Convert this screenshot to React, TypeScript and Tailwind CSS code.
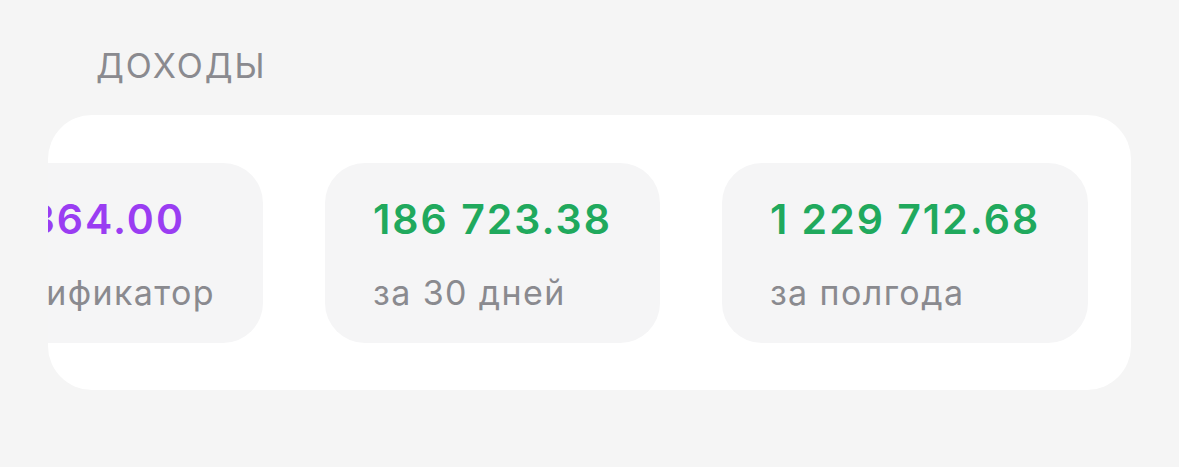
const font = { fontFamily: 'Inter, "Noto Sans", sans-serif' };

type Stat = { value: string; label: string; color: string };

const stats: Stat[] = [
  { value: '186 723.38', label: 'за 30 дней', color: 'text-[#20a95d]' },
  { value: '1 229 712.68', label: 'за полгода', color: 'text-[#20a95d]' },
];

const StatCard = ({ value, label, color }: Stat) => (
  <div className="shrink-0 rounded-[40px] bg-[#f5f5f6] px-12 pt-[32px] h-[180px]">
    <div className={`text-[41px] leading-[48px] font-semibold tracking-[2px] whitespace-nowrap ${color}`}>{value}</div>
    <div className="mt-[30px] text-[34px] leading-[40px] tracking-[1.4px] text-[#8a8a8f] whitespace-nowrap">{label}</div>
  </div>
);

export default function App() {
  return (
    <div className="w-[1179px] h-[467px] bg-[#f5f5f5] overflow-hidden" style={font}>
      <div className="pl-[96px] pt-[46px] text-[34px] leading-[40px] tracking-[2px] text-[#8a8a8f]">ДОХОДЫ</div>
      <div className="ml-12 mt-[29px] w-[1083px] h-[275px] rounded-[44px] bg-white overflow-hidden py-12 flex gap-[62px]">
        {/* first card is scrolled off to the left */}
        <div className="w-[215px] h-[180px] shrink-0 overflow-hidden flex justify-end">
          <div className="shrink-0 rounded-[40px] bg-[#f5f5f6] px-12 pt-[32px] h-[180px]">
            <div className="text-[41px] leading-[48px] font-semibold tracking-[2px] whitespace-nowrap text-[#9a3df2]">12 364.00</div>
            <div className="mt-[30px] text-[34px] leading-[40px] tracking-[1.4px] text-[#8a8a8f] whitespace-nowrap">Модификатор</div>
          </div>
        </div>
        {stats.map((s) => (
          <StatCard key={s.value} {...s} />
        ))}
      </div>
    </div>
  );
}
